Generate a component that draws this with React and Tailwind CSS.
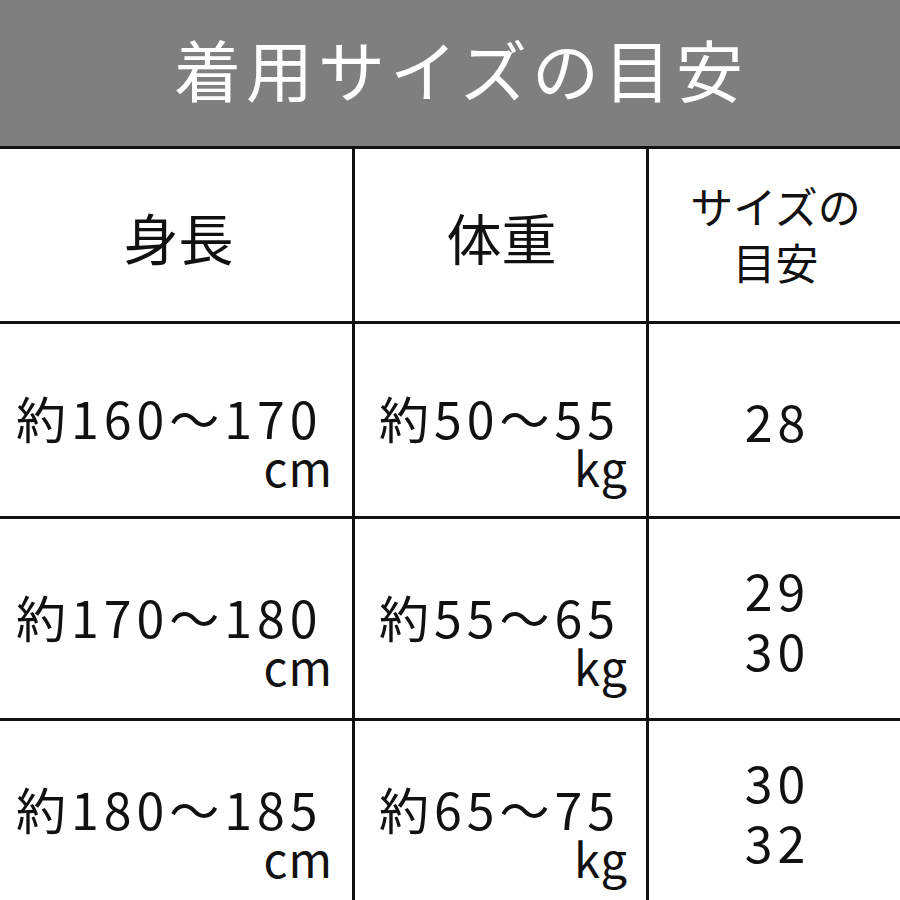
import React from 'react';

const rows = [
  { height: '約160～170', weight: '約50～55', sizes: ['28'] },
  { height: '約170～180', weight: '約55～65', sizes: ['29', '30'] },
  { height: '約180～185', weight: '約65～75', sizes: ['30', '32'] },
];

export default function App() {
  return (
    <div
      className="w-[900px] h-[900px] bg-white overflow-hidden text-[#111]"
      style={{ fontFamily: '"Noto Sans CJK JP", "Noto Sans", sans-serif' }}
    >
      {/* Title bar */}
      <div className="h-[149px] bg-[#7f7f7f] border-b-[3px] border-[#111] flex items-center justify-center">
        <h1 className="text-[67px] leading-none text-white tracking-[5px] pl-[22px] pb-[12px]">着用サイズの目安</h1>
      </div>

      {/* Table */}
      <div className="grid grid-cols-[352px_291px_1fr] grid-rows-[172px_192px_199px_1fr] gap-[3px] bg-[#111] h-[751px]">
        <div className="bg-white flex items-center justify-center text-[55px] leading-none pt-[2px] pl-[5px]">身長</div>
        <div className="bg-white flex items-center justify-center text-[55px] leading-none pt-[2px] pl-[2px]">体重</div>
        <div className="bg-white flex flex-col items-center justify-center text-[43px] leading-[56px] pb-[4px] pl-[2px]">
          <span>サイズの</span>
          <span>目安</span>
        </div>

        {rows.map((r) => (
          <React.Fragment key={r.height}>
            <div className="bg-white flex flex-col justify-center pt-[44px] pl-[16px] pr-[19px] text-[50px] leading-[50px] tracking-[5px]">
              <span className="whitespace-nowrap">{r.height}</span>
              <span className="text-right tracking-[1px] text-[47px]">cm</span>
            </div>
            <div className="bg-white flex flex-col justify-center pt-[44px] pl-[24px] pr-[18px] text-[50px] leading-[50px] tracking-[5px]">
              <span className="whitespace-nowrap">{r.weight}</span>
              <span className="text-right tracking-[1px] text-[47px]">kg</span>
            </div>
            <div className="bg-white flex flex-col items-center justify-center pl-[6px] text-[50px] leading-[60px] tracking-[5px]">
              {r.sizes.map((s) => (
                <span key={s}>{s}</span>
              ))}
            </div>
          </React.Fragment>
        ))}
      </div>
    </div>
  );
}
